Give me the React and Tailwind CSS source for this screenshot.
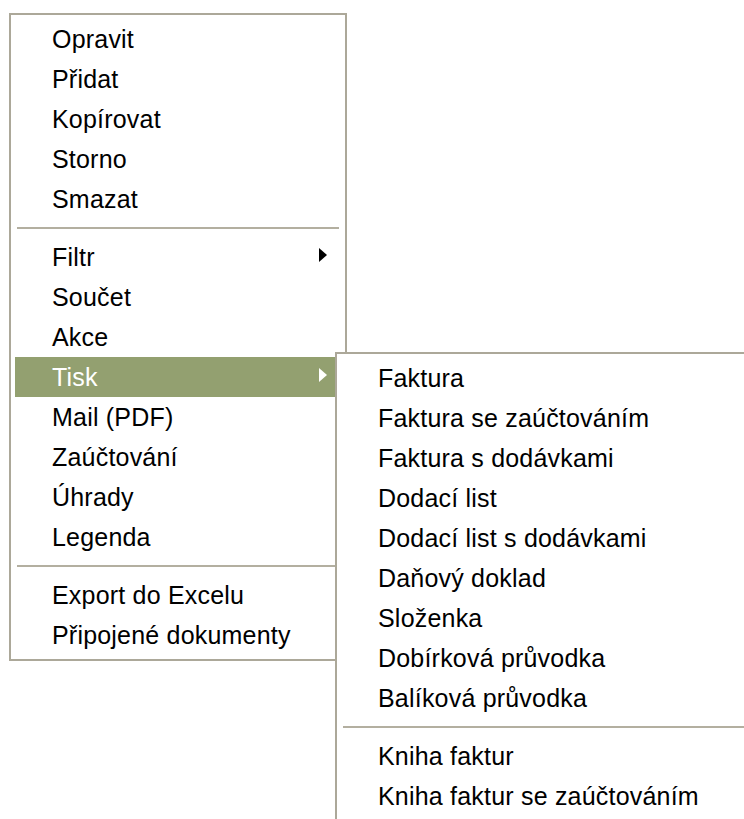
import React from "react";

const mainGroups = [
  ["Opravit", "Přidat", "Kopírovat", "Storno", "Smazat"],
  ["Filtr", "Součet", "Akce", "Tisk", "Mail (PDF)", "Zaúčtování", "Úhrady", "Legenda"],
  ["Export do Excelu", "Připojené dokumenty"],
];

const printGroups = [
  [
    "Faktura",
    "Faktura se zaúčtováním",
    "Faktura s dodávkami",
    "Dodací list",
    "Dodací list s dodávkami",
    "Daňový doklad",
    "Složenka",
    "Dobírková průvodka",
    "Balíková průvodka",
  ],
  ["Kniha faktur", "Kniha faktur se zaúčtováním"],
];

const withSubmenu = new Set(["Filtr", "Tisk"]);

function Arrow({ light }) {
  return (
    <span
      className={`absolute right-[14px] top-[11px] h-0 w-0 border-y-[7px] border-l-[8px] border-y-transparent ${
        light ? "border-l-white" : "border-l-black"
      }`}
    />
  );
}

function Item({ label, active }) {
  return (
    <div
      className={`relative h-[40px] pl-[37px] pr-[40px] whitespace-nowrap leading-[40px] tracking-[0.2px] ${
        active ? "bg-[#93a070] text-white" : "text-black"
      }`}
    >
      {label}
      {withSubmenu.has(label) && <Arrow light={active} />}
    </div>
  );
}

function Separator() {
  return (
    <div className="h-[18px] pt-[8px] mx-[2px]">
      <div className="h-[2px] bg-[#b3afa0]" />
    </div>
  );
}

function Menu({ groups, active, className }) {
  return (
    <div className={`border-2 border-[#aca899] bg-white px-[4px] pt-[4px] pb-[4px] ${className}`}>
      {groups.map((group, gi) => (
        <React.Fragment key={gi}>
          {gi > 0 && <Separator />}
          {group.map((label) => (
            <Item key={label} label={label} active={label === active} />
          ))}
        </React.Fragment>
      ))}
    </div>
  );
}

export default function App() {
  return (
    <div
      className="relative h-[819px] w-[744px] overflow-hidden bg-white text-[25px]"
      style={{ fontFamily: '"Liberation Sans", Arial, sans-serif' }}
    >
      <div className="pl-[9px] pt-[13px]">
        <Menu groups={mainGroups} active="Tisk" className="w-[338px]" />
      </div>
      <Menu
        groups={printGroups}
        className="absolute left-[335px] top-[352px] w-[440px] pt-[3px]"
      />
    </div>
  );
}
